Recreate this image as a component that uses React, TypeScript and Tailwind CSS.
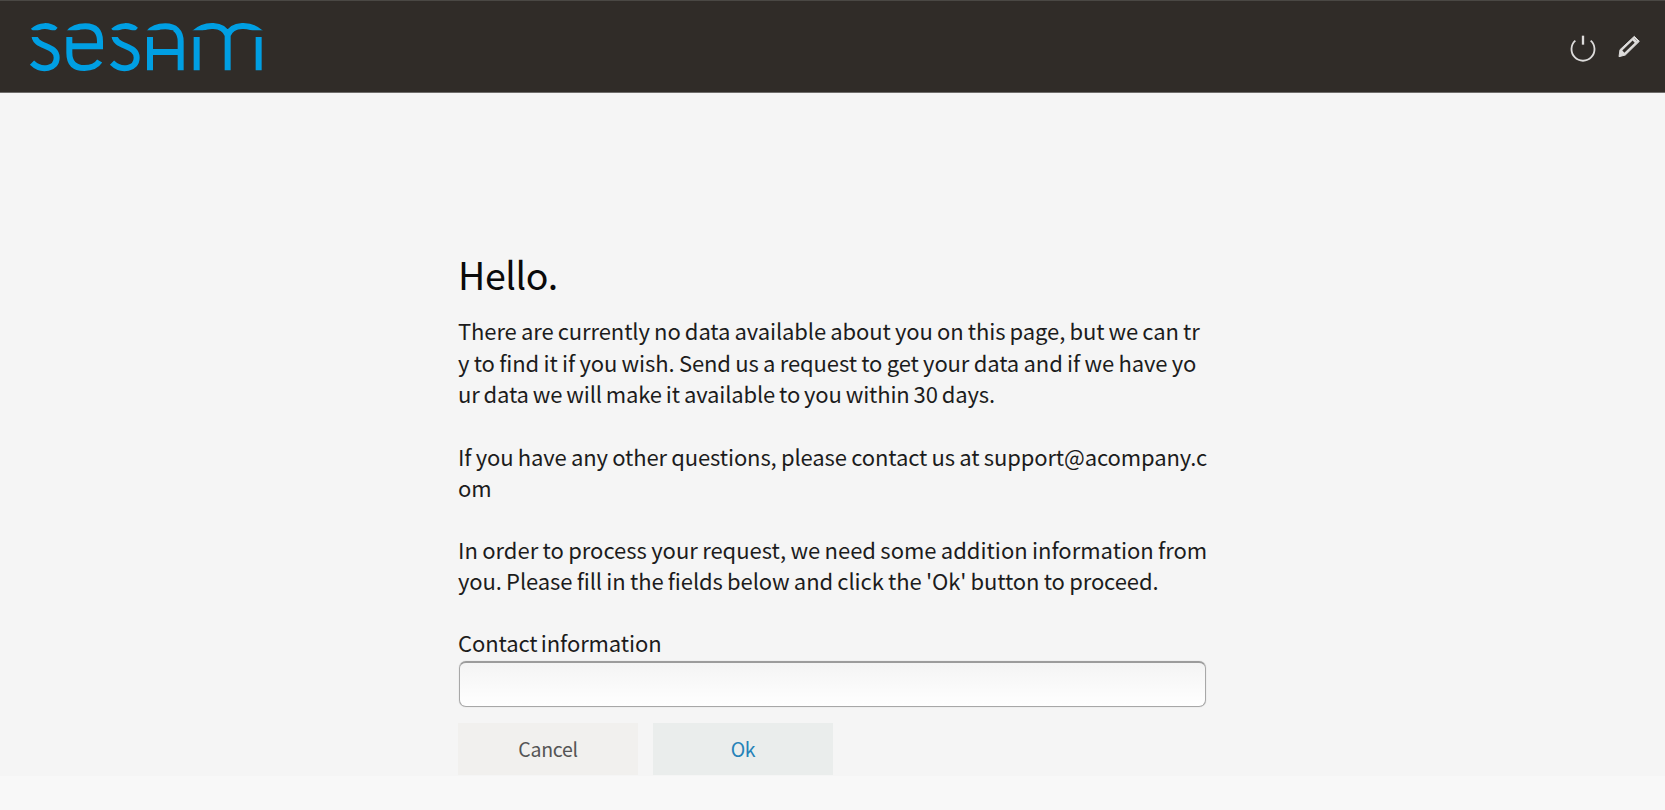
import React from "react";

type LineProps = { text: string; className?: string };

function Line({ text, className = "" }: LineProps) {
  return <span className={"block w-max whitespace-nowrap " + className}>{text}</span>;
}

function Logo() {
  return (
    <svg className="block h-[92px] w-[300px]" viewBox="0 3 900 276" fill="none" stroke="#009fe3" strokeWidth="18" aria-label="sesam" role="img">
      <defs>
        <clipPath id="stencil">
          <rect x="0" y="0" width="900" height="91" />
          <rect x="0" y="111" width="900" height="165" />
          <rect x="270" y="90" width="45" height="22" />
          <rect x="520" y="90" width="40" height="22" />
          <rect x="655" y="90" width="55" height="22" />
        </clipPath>
      </defs>
      <path d="M167 90C148 74 119 74 99 93M408 90C389 74 360 74 340 93" clipPath="url(#stencil)" />
      <g clipPath="url(#stencil)">
        <path d="M206 99C217 85 234 79 256 79C284 79 300 93 300 124V139H212" />
        <path d="M446 99C457 85 474 79 496 79C525 79 542 94 542 125V211M450 156H542" />
        <path d="M583 99C614 70 670 70 683 106V211M683 106C696 70 752 70 783 99" />
        <path d="M103 100C100 146 170 130 170 173C170 206 126 217 96 188" />
        <path d="M343 100C340 146 410 130 410 173C410 206 366 217 336 188" />
        <path d="M208 105V158C208 190 225 204 253 204C274 204 290 197 299 183" />
        <path d="M450 211V105M590 211V105M776 211V105" />
      </g>
    </svg>
  );
}

export default function App() {
  return (
    <div className="flex h-[810px] w-full flex-col overflow-hidden bg-[#f8f8f8] font-['Noto_Sans_CJK_SC',sans-serif] text-[#1c1c1c]">
      <header className="flex h-[93px] shrink-0 items-start justify-between border-t border-b border-t-[#4a4844] border-b-[#6f6d6b] bg-[#302c28]">
        <Logo />
        <svg className="h-[92px] w-[125px]" viewBox="0 3 375 276" fill="none" stroke="#dddcdb" aria-hidden="true">
          <path d="M106 122A34.500 34.500 0 1 0 152 122" strokeWidth="5.500" />
          <path d="M129 107V134" strokeWidth="7" />
          <path d="M237 170L240 149L283 109L298 124L256 165Z" fill="#dddcdb" strokeWidth="3" strokeLinejoin="round" />
          <path d="M250 155L281 125" stroke="#302c28" strokeWidth="9" />
          <path d="M283 115L291 123" stroke="#8a8784" strokeWidth="2" />
        </svg>
      </header>
      <main className="flex h-[683px] shrink-0 flex-col bg-[#f5f5f5] pl-[458px]">
        <h1 className="mt-[153px] h-[56px] text-[37.5px] leading-[56px] tracking-[-0.4px] text-[#0a0a0a]">
          <Line text="Hello." />
        </h1>
        <div className="mt-[13px] flex flex-col text-[22px] leading-[31.5px]">
          <Line text="There are currently no data available about you on this page, but we can tr" className="tracking-[-0.1px] [word-spacing:-0.6px]" />
          <Line text="y to find it if you wish. Send us a request to get your data and if we have yo" className="tracking-[-0.1px] [word-spacing:-0.44px]" />
          <Line text="ur data we will make it available to you within 30 days." className="tracking-[-0.14px] [word-spacing:-0.83px]" />
        </div>
        <div className="mt-[31px] flex flex-col text-[22px] leading-[31.5px]">
          <Line text="If you have any other questions, please contact us at support@acompany.c" className="tracking-[-0.12px] [word-spacing:-0.45px]" />
          <Line text="om" />
        </div>
        <div className="mt-[30px] flex flex-col text-[22px] leading-[31.5px]">
          <Line text="In order to process your request, we need some addition information from" className="[word-spacing:-0.6px]" />
          <Line text="you. Please fill in the fields below and click the 'Ok' button to proceed." className="tracking-[-0.1px] [word-spacing:-0.5px]" />
        </div>
        <label className="mt-[30px] flex w-[750px] flex-col text-[22px] leading-[31.5px]">
          <Line text="Contact information" className="tracking-[-0.1px] [word-spacing:-1.5px]" />
          <input className="mt-[3px] ml-px h-[46px] w-[747px] rounded-[7px] border border-t-2 border-[#a8a8a8] border-t-[#9c9c9c] bg-linear-to-b from-[#f4f4f4] to-white px-3 shadow-[0_0_1px_#bbbbbb] outline-none" />
        </label>
        <div className="mt-auto flex gap-[15px] pb-px text-[19.5px] tracking-[-0.3px]">
          <button className="h-[52px] w-[180px] bg-[#f1f0ee] text-[#555555]">Cancel</button>
          <button className="h-[52px] w-[180px] bg-[#eaedec] text-[#2582b8]">Ok</button>
        </div>
      </main>
    </div>
  );
}
